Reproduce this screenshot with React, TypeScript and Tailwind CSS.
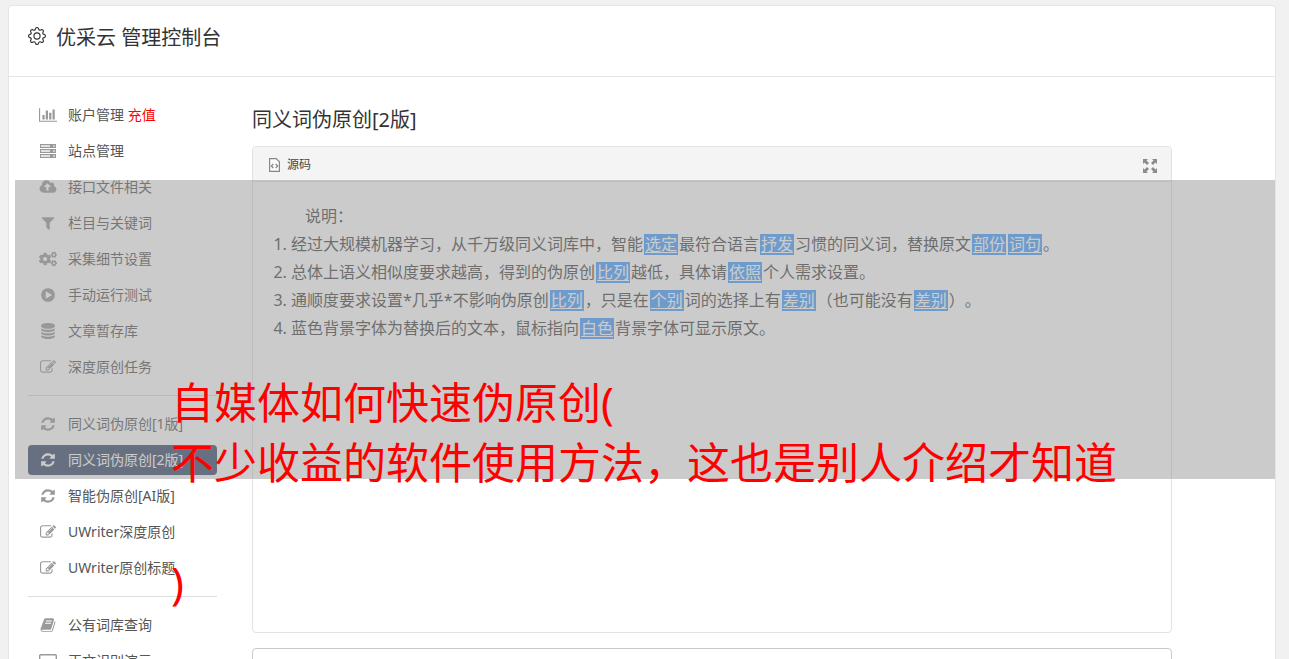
import React from 'react';
import { BsGear } from 'react-icons/bs';
import { FaCogs } from 'react-icons/fa';

interface IconProps {
  d: string;
  viewBox?: string;
  className?: string;
}

const Icon: React.FC<IconProps> = ({ d, viewBox = '0 0 1792 1792', className = 'h-4 w-4' }) => (
  <svg viewBox={viewBox} className={className} fill="currentColor" aria-hidden="true">
    <path d={d} />
  </svg>
);

const refreshPath =
  'M1639 1056q0 5-1 7-64 268-268 434.500T892 1664q-146 0-282.500-55T366 1452l-129 129q-19 19-45 19t-45-19-19-45v-448q0-26 19-45t45-19h448q26 0 45 19t19 45-19 45l-137 137q71 66 161 102t187 36q134 0 250-65t186-179q11-17 53-117 8-23 30-23h192q13 0 22.500 9.500t9.500 22.500zm25-800v448q0 26-19 45t-45 19h-448q-26 0-45-19t-19-45 19-45l138-138Q1097 384 896 384q-134 0-250 65T460 628q-11 17-53 117-8 23-30 23H178q-13 0-22.500-9.500T146 736v-7q65-268 270-434.500T896 128q146 0 284 55.500T1425 340l130-129q19-19 45-19t45 19 19 45z';
const editPath =
  'M888 1184l116-116-152-152-116 116v56h96v96h56zm440-720q-16-16-33 1L945 815q-17 17-1 33t33-1l350-350q17-17 1-33zm80 594v190q0 119-84.500 203.500T1120 1536H288q-119 0-203.500-84.500T0 1248V416q0-119 84.500-203.500T288 128h832q63 0 117 25 15 7 18 23 3 17-9 29l-49 49q-14 14-32 8-23-6-45-6H288q-66 0-113 47t-47 113v832q0 66 47 113t113 47h832q66 0 113-47t47-113v-126q0-13 9-22l64-64q15-15 35-7t20 29zm-96-738l288 288-672 672H640V992zm444 132l-92 92-288-288 92-92q28-28 68-28t68 28l152 152q28 28 28 68t-28 68z';
const chartPath =
  'M640 896v512H384V896h256zm384-512v1024H768V384h256zm1024 1152v128H0V128h128v1408h1920zm-640-896v768h-256V640h256zm384-384v1152h-256V256h256z';
const uploadPath =
  'M1344 864q0-14-9-23l-352-352q-9-9-23-9t-23 9L586 840q-10 12-10 24 0 14 9 23t23 9h224v352q0 13 9.500 22.500T864 1280h192q13 0 22.500-9.500t9.500-22.500V896h224q13 0 22.500-9.500T1344 864zm640 288q0 159-112.500 271.500T1600 1536H512q-185 0-316.500-131.500T64 1088q0-130 70-240t188-165q-2-30-2-43 0-212 150-362t362-150q156 0 285.500 87T1306 446q71-62 166-62 106 0 181 75t75 181q0 76-41 138 130 31 213.500 135.500T1984 1152z';
const filterPath =
  'M1595 295q17 41-14 70l-493 493v742q0 42-39 59-13 5-25 5-27 0-45-19l-256-256q-19-19-19-45V858L211 365q-31-29-14-70 17-39 59-39h1280q42 0 59 39z';
const playPath =
  'M896 128q209 0 385.500 103T1561 510.500 1664 896t-103 385.500-279.500 279.500T896 1664t-385.500-103T231 1281.500 128 896t103-385.500T510.500 231 896 128zm384 823q32-18 32-55t-32-55L736 521q-31-19-64-1-32 19-32 56v640q0 37 32 56 16 8 32 8 17 0 32-9z';
const databasePath =
  'M896 768q237 0 443-43t325-127v170q0 69-103 128t-280 93.500-385 34.500-385-34.500T231 896 128 768V598q119 84 325 127t443 43zm0 768q237 0 443-43t325-127v170q0 69-103 128t-280 93.500-385 34.500-385-34.500-280-93.500-103-128v-170q119 84 325 127t443 43zm0-384q237 0 443-43t325-127v170q0 69-103 128t-280 93.500-385 34.500-385-34.500-280-93.500-103-128V982q119 84 325 127t443 43zM896 0q208 0 385 34.500t280 93.500 103 128v128q0 69-103 128t-280 93.500T896 640t-385-34.500T231 512 128 384V256q0-69 103-128t280-93.500T896 0z';
const bookPath =
  'M1703 478q40 57 18 129l-275 906q-19 64-76.500 107.500T1247 1664H324q-77 0-148.500-53.500T76 1479q-24-67-2-127 0-4 3-27t4-37q1-8-3-21.500t-3-19.500q2-11 8-21t16.500-23.500T116 1179q23-38 45-91.500t30-91.500q3-10 .5-30t-.5-28q3-11 17-28t17-23q21-36 42-92t25-90q1-9-2.500-32t.5-28q4-13 22-30.500t22-22.500q19-26 42.500-84.500T404 433q1-8-3-25.500t-2-26.500q2-8 9-18t18-23 17-21q8-12 16.500-30.500t15-35 16-36 19.500-32T533.500 162t36-11.500T617 156l-1 3q38-9 51-9h761q74 0 114 56t18 130l-274 906q-36 119-71.500 153.500T1086 1430H217q-27 0-38 15-11 16-1 43 24 70 144 70h923q29 0 56-15.500t35-41.500l300-987q7-22 5-57 38 15 59 43zM639 480q-4 13 2 22.500t20 9.500h608q13 0 25.500-9.500T1311 480l21-64q4-13-2-22.500t-20-9.500H702q-13 0-25.500 9.500T660 416zm-83 256q-4 13 2 22.500t20 9.500h608q13 0 25.500-9.500T1228 736l21-64q4-13-2-22.500t-20-9.500H619q-13 0-25.500 9.500T577 672z';

const ServerIcon = () => (
  <svg viewBox="0 0 16 14" className="h-3.5 w-4" fill="currentColor" aria-hidden="true">
    {[0, 5, 10].map((y) => (
      <g key={y}>
        <rect y={y} width="16" height="4" />
        <rect x="1" y={y + 1} width="9" height="2" fill="#fff" opacity="0.7" />
        <rect x="13" y={y + 1} width="2" height="2" fill="#fff" opacity="0.5" />
      </g>
    ))}
  </svg>
);

const LaptopIcon = () => (
  <svg viewBox="0 0 18 14" className="h-3.5 w-[18px]" fill="none" stroke="currentColor" aria-hidden="true">
    <rect x="0.7" y="0.7" width="16.600" height="10.600" rx="1" strokeWidth="1.400" />
    <path d="M5 13.300h8" strokeWidth="1.400" />
  </svg>
);

const ExpandIcon = () => (
  <svg viewBox="0 0 14 14" className="h-3.5 w-3.5" fill="currentColor" aria-hidden="true">
    <path d="M0 0h5L3.500 1.500 6 4 4 6 1.500 3.500 0 5zM14 0v5l-1.500-1.500L10 6 8 4l2.500-2.500L9 0zM0 14V9l1.500 1.500L4 8l2 2-2.500 2.500L5 14zM14 14H9l1.500-1.500L8 10l2-2 2.500 2.500L14 9z" />
  </svg>
);

const SourceIcon = () => (
  <svg viewBox="0 0 11 14" className="h-3.5 w-[11px]" fill="none" stroke="#888" aria-hidden="true">
    <path d="M.6.6h6.600l3.200 3.200v9.600H.6z" fill="#fafafa" strokeWidth="1.200" />
    <path d="M4.300 6 2.400 8l1.900 2M6.700 6l1.900 2-1.900 2" strokeWidth="1.300" />
  </svg>
);

interface MenuItem {
  label: string;
  icon: React.ReactNode;
  note?: string;
  active?: boolean;
}

const menuGroups: MenuItem[][] = [
  [
    { label: '账户管理', note: '充值', icon: <Icon d={chartPath} viewBox="0 0 2048 1792" className="h-4 w-[18px]" /> },
    { label: '站点管理', icon: <ServerIcon /> },
    { label: '接口文件相关', icon: <Icon d={uploadPath} viewBox="0 0 2048 1792" className="h-4 w-[18px]" /> },
    { label: '栏目与关键词', icon: <Icon d={filterPath} /> },
    { label: '采集细节设置', icon: <FaCogs className="h-4 w-[18px]" /> },
    { label: '手动运行测试', icon: <Icon d={playPath} /> },
    { label: '文章暂存库', icon: <Icon d={databasePath} /> },
    { label: '深度原创任务', icon: <Icon d={editPath} /> },
  ],
  [
    { label: '同义词伪原创[1版]', icon: <Icon d={refreshPath} /> },
    { label: '同义词伪原创[2版]', icon: <Icon d={refreshPath} />, active: true },
    { label: '智能伪原创[AI版]', icon: <Icon d={refreshPath} /> },
    { label: 'UWriter深度原创', icon: <Icon d={editPath} /> },
    { label: 'UWriter原创标题', icon: <Icon d={editPath} /> },
  ],
  [
    { label: '公有词库查询', icon: <Icon d={bookPath} /> },
    { label: '正文识别演示', icon: <LaptopIcon /> },
  ],
];

const Word: React.FC<{ children: React.ReactNode }> = ({ children }) => (
  <a href="#word" className="mx-px inline-block h-[21px] bg-[#459fff] px-px leading-[21px] text-white underline underline-offset-2">
    {children}
  </a>
);

const App: React.FC = () => {
  return (
    <div className="relative h-screen overflow-hidden bg-[#f1f1f1] px-2 pt-[5px] pr-[13px] font-['Noto_Sans','Noto_Sans_CJK_SC',sans-serif] text-[#444] [text-spacing-trim:space-all]">
      <div className="min-h-full rounded-t border border-[#e5e5e5] bg-white">
        <header className="flex h-[71px] items-start gap-2.5 border-b border-[#e5e5e5] pt-[17px] pl-[19px] text-[#333]">
          <BsGear className="mt-1 h-[18px] w-[18px]" />
          <h1 className="text-xl leading-[30px]">优采云 管理控制台</h1>
        </header>

        <div className="flex gap-[35px] pt-[23px] pr-5 pl-[19px]">
          <nav className="w-[189px] shrink-0">
            {menuGroups.map((group, i) => (
              <ul
                key={i}
                className={i ? 'mt-[13px] space-y-1.5 border-t border-[#ddd] pt-[13px]' : 'space-y-1.5'}
              >
                {group.map((item) => (
                  <li key={item.label}>
                    <a
                      href="#menu"
                      className={
                        item.active
                          ? 'flex h-[30px] items-center gap-2.5 rounded bg-[#374969] pl-2.5 text-sm whitespace-nowrap text-white'
                          : 'flex h-[30px] items-center gap-2.5 pl-2.5 text-sm whitespace-nowrap text-[#555]'
                      }
                    >
                      <span className={item.active ? 'flex w-5 justify-center text-white' : 'flex w-5 justify-center text-[#999]'}>
                        {item.icon}
                      </span>
                      <span>
                        {item.label}
                        {item.note && <span className="text-[#f00]"> {item.note}</span>}
                      </span>
                    </a>
                  </li>
                ))}
              </ul>
            ))}
          </nav>

          <main className="max-w-[920px] min-w-0 flex-1">
            <h2 className="mt-[5px] text-xl leading-[30px] text-[#333]">同义词伪原创[2版]</h2>

            <section className="mt-[11px] h-[487px] rounded border border-[#e2e2e2]">
              <div className="flex h-[35px] items-center justify-between rounded-t border-b border-[#e2e2e2] bg-[#f4f4f4] pr-3.5 pl-4">
                <button type="button" className="flex items-center gap-[7px] pt-0.5 text-xs text-[#444]">
                  <SourceIcon />
                  源码
                </button>
                <button type="button" aria-label="全屏" className="pt-1 text-[#8c8c8c]">
                  <ExpandIcon />
                </button>
              </div>
              <div className="pt-5 pl-5 text-base leading-7">
                <p className="pl-8">说明：</p>
                <ol className="list-decimal pl-[18px]">
                  <li>
                    经过大规模机器学习，从千万级同义词库中，智能<Word>选定</Word>最符合语言<Word>抒发</Word>
                    习惯的同义词，替换原文<Word>部份</Word><Word>词句</Word>。
                  </li>
                  <li>
                    总体上语义相似度要求越高，得到的伪原创<Word>比列</Word>越低，具体请<Word>依照</Word>个人需求设置。
                  </li>
                  <li>
                    通顺度要求设置*几乎*不影响伪原创<Word>比列</Word>，只是在<Word>个别</Word>词的选择上有
                    <Word>差别</Word>（也可能没有<Word>差别</Word>）。
                  </li>
                  <li>
                    蓝色背景字体为替换后的文本，鼠标指向<Word>白色</Word>背景字体可显示原文。
                  </li>
                </ol>
              </div>
            </section>

            <textarea aria-label="原文内容" className="mt-[15px] block h-40 w-full resize-none rounded border border-[#c8c8c8]" />
          </main>
        </div>
      </div>

      {/* Caption band laid over the console */}
      <div className="pointer-events-none absolute top-[180px] right-3.5 left-[15px] h-[299px] bg-[#979797]/50" />
      <p className="pointer-events-none absolute top-[373px] left-[171px] text-[43px] leading-[60px] whitespace-nowrap text-[#f00]">
        自媒体如何快速伪原创(
        <br />
        不少收益的软件使用方法，这也是别人介绍才知道
        <br />
        <br />)
      </p>
    </div>
  );
};

export default App;
